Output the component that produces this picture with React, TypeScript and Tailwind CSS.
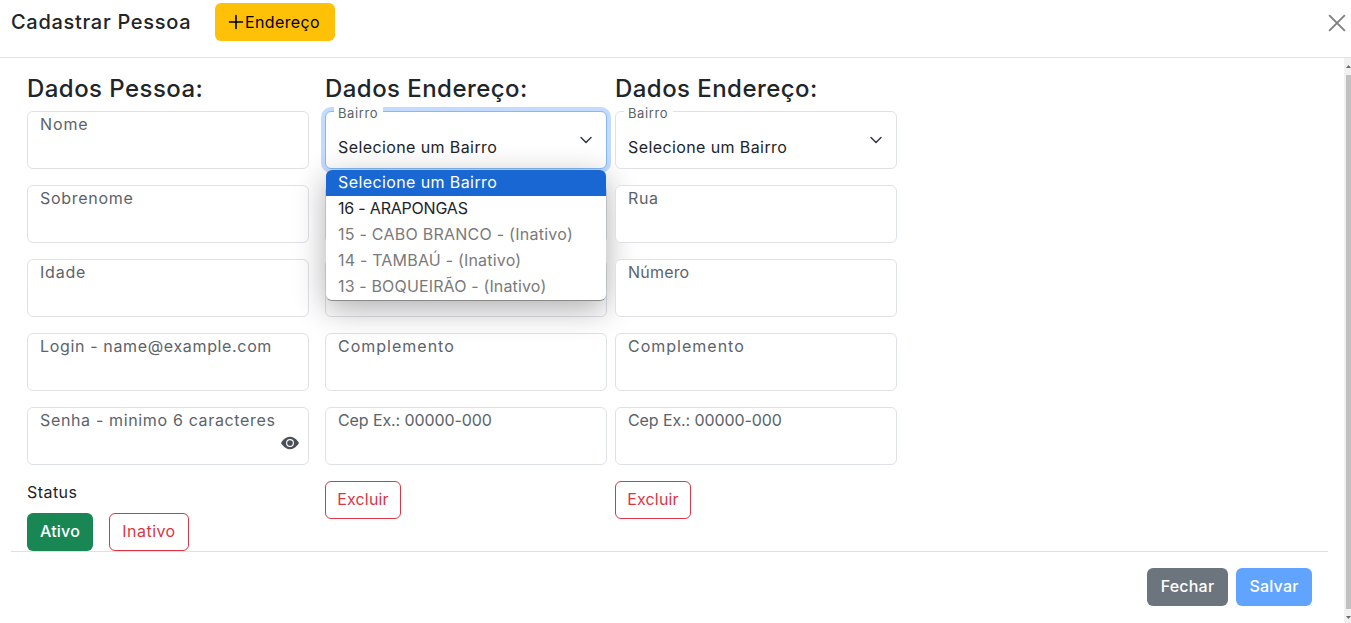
import React from "react";

const font = { fontFamily: '"Inter", "Liberation Sans", sans-serif' };

function Field({ label, track = "tracking-[0.7px]", children }: { label: string; track?: string; children?: React.ReactNode }) {
  return (
    <div className={"relative h-[58px] rounded-[6px] border border-[#dee2e6] bg-white px-3 text-[16px] leading-6 text-[#5c636a] " + track}>
      {label}
      {children}
    </div>
  );
}

function SelectField({ focused }: { focused?: boolean }) {
  return (
    <div
      className={
        "relative h-[58px] rounded-[6px] border bg-white px-3 " +
        (focused ? "border-[#86b7fe] shadow-[0_0_0_4px_rgba(13,110,253,0.25)]" : "border-[#dee2e6]")
      }
    >
      <span className="absolute left-[8px] top-[-7px] bg-white pl-1 pr-[5px] text-[13px] leading-[16px] text-[#5c636a] tracking-[0.6px]">
        Bairro
      </span>
      <div className="pt-[23px] text-[16px] leading-6 text-[#212529] tracking-[0.4px]">Selecione um Bairro</div>
      <svg className="absolute right-[12px] top-[20px]" width="16" height="16" viewBox="0 0 16 16" fill="none">
        <path d="m3 5.5 5 5 5-5" stroke="#343a40" strokeWidth="1.5" strokeLinecap="round" strokeLinejoin="round" />
      </svg>
    </div>
  );
}

function OutlineBtn({ children, w, track = "tracking-[0.15px]" }: { children: React.ReactNode; w: string; track?: string }) {
  return (
    <button className={"h-[38px] rounded-[6px] border border-[#dc3545] pb-[2px] text-[16px] text-[#dc3545] " + track + " " + w}>
      {children}
    </button>
  );
}

function Heading({ children }: { children: React.ReactNode }) {
  return <h5 className="h-[38px] pt-[2px] text-[24px] leading-[35px] font-medium tracking-[0.45px] text-[#212529]">{children}</h5>;
}

export default function App() {
  return (
    <div className="h-[623px] w-[1351px] overflow-hidden bg-white" style={font}>
      <header className="flex h-[58px] items-start border-b border-[#dee2e6] pl-[11px] pr-[5px]">
        <h1 className="w-[204px] pt-[7px] text-[20px] leading-[30px] font-medium tracking-[0.7px] text-[#212529]">
          Cadastrar Pessoa
        </h1>
        <button className="mt-[3px] flex h-[38px] w-[120px] items-center justify-center gap-[1px] rounded-[6px] bg-[#ffc107] pr-[2px] text-[16px] tracking-[0.4px] text-black">
          <svg width="16" height="16" viewBox="0 0 16 16" fill="none">
            <path d="M8 1.5v13M1.5 8h13" stroke="#000" strokeWidth="1.6" strokeLinecap="round" />
          </svg>
          Endereço
        </button>
        <svg className="ml-auto mt-[14px]" width="18" height="18" viewBox="0 0 16 16" fill="none">
          <path d="M1 1l14 14M15 1 1 15" stroke="#808080" strokeWidth="1.7" />
        </svg>
      </header>

      <div className="flex h-[565px]">
        <div className="flex-1 pt-[11px]">
          <div className="flex h-[482px] pl-[27px]">
            <div className="flex w-[282px] flex-col">
              <Heading>Dados Pessoa:</Heading>
              <div className="mt-[4px] flex flex-col gap-4">
                <Field label="Nome" track="tracking-[0.9px]" />
                <Field label="Sobrenome" />
                <Field label="Idade" track="tracking-[0.8px]" />
                <Field label="Login - name@example.com" track="tracking-[0.65px]" />
                <Field label="Senha - minimo 6 caracteres" track="tracking-[0.65px]">
                  <svg className="absolute right-[9px] top-[26px]" width="18" height="18" viewBox="0 0 16 16" fill="#495057">
                    <path d="M10.5 8a2.5 2.5 0 1 1-5 0 2.5 2.5 0 0 1 5 0" />
                    <path d="M0 8s3-5.5 8-5.5S16 8 16 8s-3 5.5-8 5.5S0 8 0 8m8 3.5a3.5 3.5 0 1 0 0-7 3.5 3.5 0 0 0 0 7" />
                  </svg>
                </Field>
              </div>
              <div className="mt-[16px] text-[16px] leading-[22px] tracking-[0.45px] text-[#212529]">Status</div>
              <div className="mt-[10px] flex gap-4">
                <button className="h-[38px] w-[66px] rounded-[6px] bg-[#198754] pb-[2px] text-[16px] font-medium tracking-[0.2px] text-white">Ativo</button>
                <OutlineBtn w="w-[80px]" track="tracking-[0.45px]">Inativo</OutlineBtn>
              </div>
            </div>

            <div className="relative ml-4 flex w-[282px] flex-col">
              <Heading>Dados Endereço:</Heading>
              <div className="mt-[4px] flex flex-col gap-4">
                <SelectField focused />
                <Field label="Rua" track="tracking-[0.6px]" />
                <Field label="Número" track="tracking-[0.2px]" />
                <Field label="Complemento" track="tracking-[1px]" />
                <Field label="Cep Ex.: 00000-000" track="tracking-[-0.1px]" />
              </div>
              <div className="mt-4">
                <OutlineBtn w="w-[76px]">Excluir</OutlineBtn>
              </div>
              <ul className="absolute left-[1px] top-[101px] w-[280px] overflow-hidden rounded-[6px] border-b border-[#8a8a8a] bg-white text-[16px] leading-[24px] shadow-[0_8px_32px_rgba(0,0,0,0.32)]">
                <li className="h-[26px] bg-[#1967d2] pl-3 tracking-[0.4px] text-white">Selecione um Bairro</li>
                <li className="h-[26px] pl-3 tracking-[-0.2px] text-[#212529]">16 - ARAPONGAS</li>
                <li className="h-[26px] pl-3 tracking-[0.25px] text-[#7a7a7a]">15 - CABO BRANCO - (Inativo)</li>
                <li className="h-[26px] pl-3 tracking-[0.2px] text-[#7a7a7a]">14 - TAMBAÚ - (Inativo)</li>
                <li className="h-[26px] pl-3 tracking-[0.15px] text-[#7a7a7a]">13 - BOQUEIRÃO - (Inativo)</li>
              </ul>
            </div>

            <div className="ml-2 flex w-[282px] flex-col">
              <Heading>Dados Endereço:</Heading>
              <div className="mt-[4px] flex flex-col gap-4">
                <SelectField />
                <Field label="Rua" track="tracking-[0.6px]" />
                <Field label="Número" track="tracking-[0.2px]" />
                <Field label="Complemento" track="tracking-[1px]" />
                <Field label="Cep Ex.: 00000-000" track="tracking-[-0.1px]" />
              </div>
              <div className="mt-4">
                <OutlineBtn w="w-[76px]">Excluir</OutlineBtn>
              </div>
            </div>
          </div>
          <footer className="ml-[11px] mr-[16px] flex justify-end gap-2 border-t border-[#dee2e6] pr-[16px] pt-[16px]">
            <button className="h-[38px] w-[81px] rounded-[6px] bg-[#6c757d] pb-[2px] text-[16px] font-medium tracking-[0.2px] text-white">Fechar</button>
            <button className="h-[38px] w-[76px] rounded-[6px] bg-[#61a4ff] pb-[2px] text-[16px] font-medium tracking-[0.2px] text-white">Salvar</button>
          </footer>
        </div>
        <div className="flex h-full w-[7px] flex-col items-end bg-[#f1f1f1]">
          <svg className="mt-[7px] h-[3px] w-[5px] shrink-0" viewBox="0 0 5 3">
            <path d="M2.5 0 5 3H0z" fill="#6b6b6b" />
          </svg>
          <div className="mt-[7px] h-[534px] w-[5px] shrink-0 bg-[#c1c1c1]" />
          <svg className="mt-[7px] h-[3px] w-[5px] shrink-0" viewBox="0 0 5 3">
            <path d="M0 0h5L2.5 3z" fill="#6b6b6b" />
          </svg>
        </div>
      </div>
    </div>
  );
}
